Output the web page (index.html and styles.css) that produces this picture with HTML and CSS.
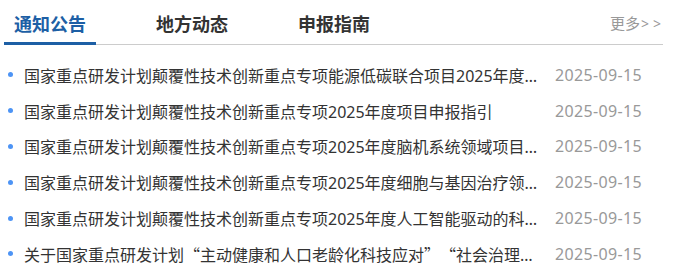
FILE: index.html
```html
<!DOCTYPE html>
<html lang="zh-CN">
<head>
<meta charset="utf-8">
<title>通知公告</title>
<link rel="stylesheet" href="styles.css">
</head>
<body>
<div class="panel">
  <div class="tabs">
    <a class="tab active" href="#">通知公告</a>
    <a class="tab" href="#">地方动态</a>
    <a class="tab" href="#">申报指南</a>
    <a class="more" href="#">更多<span class="arrows">&gt;&gt;</span></a>
  </div>
  <ul class="list">
    <li class="item"><span class="dot"></span><a class="title" href="#">国家重点研发计划颠覆性技术创新重点专项能源低碳联合项目2025年度项目申报指南</a><span class="date">2025-09-15</span></li>
    <li class="item"><span class="dot"></span><a class="title" href="#">国家重点研发计划颠覆性技术创新重点专项2025年度项目申报指引</a><span class="date">2025-09-15</span></li>
    <li class="item"><span class="dot"></span><a class="title" href="#">国家重点研发计划颠覆性技术创新重点专项2025年度脑机系统领域项目申报指南</a><span class="date">2025-09-15</span></li>
    <li class="item"><span class="dot"></span><a class="title" href="#">国家重点研发计划颠覆性技术创新重点专项2025年度细胞与基因治疗领域项目申报指南</a><span class="date">2025-09-15</span></li>
    <li class="item"><span class="dot"></span><a class="title" href="#">国家重点研发计划颠覆性技术创新重点专项2025年度人工智能驱动的科学研究项目申报指南</a><span class="date">2025-09-15</span></li>
    <li class="item"><span class="dot"></span><a class="title" href="#">关于国家重点研发计划<span class="q">“</span>主动健康和人口老龄化科技应对<span class="q">”</span><span class="q">“</span>社会治理与智慧社会科技支撑<span class="q">”</span>等重点专项2025年度项目申报指南的通知</a><span class="date">2025-09-15</span></li>
  </ul>
</div>
</body>
</html>
```

FILE: styles.css
```css
html, body {
  margin: 0;
  padding: 0;
  background: #fff;
}

body {
  font-family: "Noto Sans", "Noto Sans CJK SC", sans-serif;
  color: #333;
  text-spacing-trim: space-all;
}

a {
  text-decoration: none;
  color: inherit;
}

.panel {
  width: 659px;
  margin-left: 4px;
}

.tabs {
  display: flex;
  align-items: flex-start;
  gap: 50px;
  height: 44px;
  border-bottom: 1px solid #cccccc;
}

.tab {
  box-sizing: border-box;
  width: 92px;
  height: 45px;
  padding-top: 4px;
  text-align: center;
  font-family: "Noto Sans CJK SC", sans-serif;
  font-size: 18px;
  font-weight: bold;
  line-height: 38px;
  color: #333;
  border-bottom: 3px solid transparent;
}

.tab.active {
  color: #1d5fa5;
  border-bottom-color: #1d5fa5;
}

.more {
  margin-left: auto;
  margin-right: -2px;
  padding-top: 4px;
  font-family: "Noto Sans CJK SC", sans-serif;
  font-size: 15px;
  line-height: 38px;
  color: #999;
}

.arrows {
  font-family: "Noto Sans", sans-serif;
  font-size: 14px;
  letter-spacing: 4px;
  margin-left: 1px;
}

.list {
  list-style: none;
  margin: 0;
  padding: 12px 0 0 0;
}

.item {
  display: flex;
  align-items: center;
  height: 35.8px;
  padding-right: 21px;
  font-size: 16px;
}

.dot {
  flex: none;
  width: 5px;
  height: 5px;
  border-radius: 50%;
  background: #4d94f5;
  margin-left: 4px;
  margin-right: 11px;
}

.title {
  flex: 1;
  min-width: 0;
  white-space: nowrap;
  overflow: hidden;
  text-overflow: ellipsis;
  color: #333;
  margin-right: 15px;
}

.q {
  font-family: "Noto Sans CJK SC", sans-serif;
}

.date {
  flex: none;
  color: #999;
  letter-spacing: 0.35px;
}
```
